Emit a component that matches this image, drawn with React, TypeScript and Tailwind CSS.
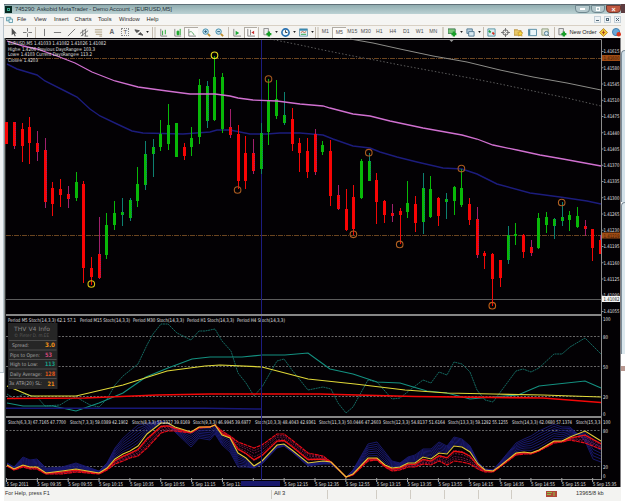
import type { ReactNode } from 'react'

type Point = [number, number]

// open/close body and wick extents, already in chart pixels
type Candle = [wickTop: number, bodyTop: number, bodyBottom: number, wickBottom: number, side: string]

const CANDLES: Candle[] = [
  [122, 122, 144, 144, 'r'], [122, 122, 146, 149, 'm'], [123, 129, 146, 162, 'r'], [117, 127, 143, 164, 'r'],
  [131, 143, 152, 161, 'm'], [138, 150, 202, 208, 'm'], [182, 188, 204, 216, 'r'], [179, 189, 195, 207, 'r'],
  [186, 194, 199, 208, 'm'], [172, 182, 198, 201, 'g'], [181, 184, 268, 283, 'r'], [257, 268, 277, 285, 'r'],
  [217, 254, 278, 279, 'm'], [213, 225, 255, 259, 'g'], [201, 213, 225, 230, 'g'], [198, 212, 215, 226, 't'],
  [198, 200, 218, 221, 't'], [167, 184, 201, 207, 'g'], [141, 154, 185, 190, 't'], [139, 147, 154, 177, 't'],
  [120, 134, 147, 151, 'g'], [104, 125, 144, 150, 'g'], [123, 123, 157, 157, 'g'], [143, 147, 156, 160, 'r'],
  [127, 138, 147, 156, 'g'], [79, 85, 137, 144, 'g'], [81, 86, 121, 128, 't'], [56, 77, 120, 121, 'g'],
  [73, 77, 129, 133, 'g'], [109, 127, 135, 138, 'm'], [125, 134, 181, 189, 'r'], [136, 153, 181, 189, 'r'],
  [139, 153, 171, 174, 'm'], [123, 133, 169, 174, 't'], [79, 101, 132, 145, 'g'], [80, 99, 116, 119, 'g'],
  [92, 115, 123, 125, 't'], [108, 119, 144, 151, 'r'], [138, 143, 153, 172, 'r'], [138, 151, 172, 178, 'r'],
  [129, 134, 172, 175, 'm'], [141, 145, 152, 155, 'g'], [140, 151, 196, 206, 'r'], [185, 195, 209, 210, 'm'],
  [189, 209, 230, 231, 'r'], [185, 197, 229, 235, 'r'], [159, 161, 198, 199, 'g'], [153, 161, 181, 181, 't'],
  [173, 180, 202, 224, 'r'], [200, 201, 215, 223, 'r'], [204, 213, 216, 222, 'm'], [208, 211, 215, 244, 'r'],
  [181, 203, 212, 218, 'g'], [196, 204, 223, 232, 'r'], [173, 188, 222, 234, 't'], [176, 189, 217, 218, 'g'],
  [197, 198, 216, 226, 'r'], [193, 199, 202, 219, 't'], [186, 187, 201, 215, 'g'], [169, 188, 205, 207, 'g'],
  [198, 204, 220, 225, 'r'], [207, 219, 255, 258, 'm'], [251, 253, 256, 269, 'r'], [253, 254, 279, 306, 'r'],
  [260, 260, 278, 287, 'r'], [226, 235, 260, 264, 't'], [223, 234, 236, 245, 'g'], [234, 235, 252, 258, 'r'],
  [240, 247, 253, 256, 'm'], [213, 218, 248, 249, 'g'], [212, 217, 225, 233, 'g'], [218, 219, 226, 239, 't'],
  [202, 217, 221, 226, 't'], [211, 215, 220, 231, 'g'], [207, 216, 227, 228, 'g'], [220, 226, 229, 236, 'm'],
  [229, 229, 248, 261, 'r'], [235, 240, 254, 254, 'm'],
]

const WICK: Record<string, string> = { r: '#f00808', m: '#a0206c', g: '#08b808', t: '#0d8070' }

const PINK: Point[] = [
  [7, 41], [23, 46], [37, 49], [57, 56], [75, 63], [92, 72], [115, 81], [138, 87], [167, 91], [190, 94], [215, 94],
  [230, 96], [238, 98], [253, 100], [277, 101], [300, 104], [323, 106], [330, 108], [353, 114], [370, 116], [390, 121],
  [423, 128], [462, 135], [477, 139], [493, 145], [517, 150], [540, 155], [563, 159], [601, 166],
]
const BLUE: Point[] = [
  [7, 64], [17, 69], [37, 75], [45, 81], [67, 92], [77, 97], [90, 109], [100, 116], [117, 124], [132, 131], [143, 133],
  [183, 134], [210, 132], [217, 130], [230, 130], [250, 134], [267, 134], [280, 133], [300, 133], [323, 135], [333, 139],
  [353, 146], [370, 148], [380, 152], [397, 157], [417, 162], [443, 168], [462, 169], [477, 174], [497, 184], [530, 193],
  [560, 197], [587, 201], [601, 204],
]
const GREY: Point[] = [[350, 39], [373, 43], [400, 49], [433, 56], [467, 62], [500, 70], [533, 77], [567, 83], [601, 90]]
const DOTTED: Point[] = [
  [270, 39], [300, 45], [323, 50], [353, 56], [380, 61], [400, 65], [443, 73], [470, 78], [500, 84], [533, 91], [567, 98], [601, 106],
]

const MARKERS: [number, number, string][] = [
  [91.3, 284, '#d8c010'], [214.5, 55.3, '#e8e020'], [268.5, 79, '#a85a20'], [237.6, 190, '#a85a20'], [353.4, 234.3, '#b06022'],
  [368.8, 152.7, '#a85a20'], [399.7, 244.4, '#b06022'], [461.4, 168.6, '#a85a20'], [492.3, 305.7, '#c06018'], [561.7, 202.5, '#b06022'],
]

const STOCH_FAST: Point[] = [
  [7, 394], [15, 399], [23, 394], [37, 397], [45, 406], [60, 405], [68, 400], [76, 397], [90, 405], [99, 407], [107, 399],
  [115, 385], [123, 376], [138, 364], [147, 345], [153, 334], [161, 324], [168, 324], [177, 333], [191, 340], [199, 331],
  [205, 331], [215, 329], [222, 341], [231, 351], [238, 373], [246, 383], [254, 396], [262, 387], [277, 361], [284, 359],
  [292, 370], [308, 390], [323, 387], [331, 389], [338, 403], [346, 413], [353, 407], [368, 380], [377, 382], [392, 399],
  [400, 398], [410, 390], [423, 380], [431, 383], [439, 372], [447, 375], [454, 362], [462, 364], [470, 372], [477, 390],
  [485, 400], [493, 402], [516, 371], [523, 369], [531, 372], [539, 368], [554, 354], [562, 354], [570, 347], [585, 338], [601, 354],
]
const STOCH_TEAL: Point[] = [
  [7, 403], [23, 406], [53, 406], [76, 411], [99, 403], [123, 393], [146, 377], [168, 368], [192, 359], [210, 357], [242, 357],
  [262, 355], [285, 355], [308, 353], [330, 369], [353, 374], [377, 382], [400, 383], [410, 386], [427, 391], [447, 393],
  [470, 399], [493, 397], [518, 395], [539, 386], [585, 381], [601, 388],
]
const STOCH_YELLOW: Point[] = [
  [7, 386], [31, 396], [76, 396], [123, 385], [167, 371], [205, 366], [220, 365], [262, 367], [308, 379], [355, 384],
  [405, 390], [447, 393], [493, 394], [543, 395], [601, 397],
]
const STOCH_RED: Point[] = [[7, 398.5], [85, 398], [157, 395], [210, 394], [320, 394], [415, 396.5], [543, 398], [601, 402.5]]

// x, signal line, slow edge of the red bundle, fast edge of the blue bundle
const RIBBON: [number, number, number, number][] = [
  [7, 465, 466, 463], [14, 469, 470, 467], [23, 465, 467, 457], [30, 467, 469, 460], [37, 467, 469, 459], [46, 473, 474, 468],
  [62, 471, 474, 467], [76, 469, 472, 463], [99, 473, 474, 471], [107, 468, 470, 463], [115, 459, 464, 448], [123, 454, 461, 438],
  [130, 451, 458, 432], [138, 446, 456, 425], [147, 434, 448, 423], [161, 423, 433, 421], [168, 423, 431, 423], [175, 427, 431, 432],
  [191, 432, 433, 447], [199, 427, 428, 438], [210, 427, 427, 440], [215, 425, 425, 434], [222, 435, 431, 445], [230, 438, 436, 452],
  [238, 453, 442, 467], [246, 458, 445, 467], [254, 466, 448, 468], [262, 461, 445, 464], [277, 445, 434, 448], [284, 444, 434, 446],
  [292, 450, 440, 452], [308, 463, 453, 466], [323, 461, 456, 464], [331, 462, 462, 464], [346, 477, 477, 477], [353, 474, 475, 470],
  [368, 458, 461, 444], [377, 458, 460, 442], [385, 465, 467, 452], [392, 468, 471, 461], [400, 467, 470, 463], [408, 463, 467, 457],
  [415, 463, 467, 455], [423, 457, 464, 449], [431, 459, 465, 449], [439, 453, 461, 442], [447, 454, 465, 446], [454, 446, 461, 437],
  [462, 447, 462, 439], [470, 452, 464, 446], [478, 464, 469, 462], [485, 470, 472, 469], [493, 471, 472, 470], [500, 466, 467, 462],
  [516, 453, 455, 443], [524, 452, 454, 439], [531, 453, 454, 436], [539, 450, 451, 431], [554, 441, 443, 424], [562, 441, 442, 427],
  [570, 437, 440, 427], [585, 431, 443, 441], [593, 436, 446, 459], [601, 441, 449, 462],
]

const PRICES = ['1.41615', '1.41580', '1.41545', '1.41510', '1.41475', '1.41440', '1.41405', '1.41370', '1.41335', '1.41300', '1.41265', '1.41230', '1.41195', '1.41160', '1.41125', '1.41090', '1.41055']

const TIMES = ['2011', '09:35', '09:55', '10:15', '10:35', '10:55', '11:15', '11:35', '', '12:15', '12:35', '12:55', '13:15', '13:35', '13:55', '14:15', '14:35', '14:55', '15:15', '15:35']

const STOCH_LABELS: [number, number, string][] = [
  [8, 68, 'Period M5 Stoch(14,3,3) 62.1 57.1'], [80, 50, 'Period M15 Stoch(14,3,3)'], [133, 51, 'Period M30 Stoch(14,3,3)'],
  [187, 47, 'Period H1 Stoch(14,3,3)'], [237, 48, 'Period H4 Stoch(14,3,3)'],
]

const RIBBON_LABELS: [number, number, string][] = [
  [8, 58, 'Stoch(6,3,3) 67.7165 47.7700'], [70, 58, 'Stoch(7,3,3) 59.0389 42.1902'], [132, 58, 'Stoch(8,3,3) 53.2327 39.8169'],
  [193, 58, 'Stoch(9,3,3) 46.9945 39.6977'], [255, 61, 'Stoch(10,3,3) 48.4043 42.9361'], [319, 62, 'Stoch(11,3,3) 50.0446 47.2603'],
  [383, 62, 'Stoch(12,3,3) 54.8137 51.6164'], [448, 60, 'Stoch(13,3,3) 59.1292 55.1255'], [512, 60, 'Stoch(14,3,3) 62.0680 57.1374'],
  [576, 24.5, 'Stoch(15,3,3'],
]

const INFO_ROWS: [string, string, string, number, number][] = [
  ['Spread:', '3.0', '#f09018', 12, 17], ['Pips to Open:', '53', '#d04878', 10, 30], ['High to Low:', '113', '#18a088', 10, 28],
  ['Daily Average:', '128', '#e05818', 10, 32], ['3x ATR(20) SL:', '21', '#f09018', 9, 33],
]

const pts = (line: Point[]) => line.map(p => p.join(',')).join(' ')

const blend = (edge: 2 | 3, t: number) => pts(RIBBON.map(row => [row[0], row[1] + (row[edge] - row[1]) * t] as Point))

function Label({ x, y, w, fill = '#e0e0e0', size = 5, bold, children }: { x: number; y: number; w?: number; fill?: string; size?: number; bold?: boolean; children: string }) {
  return (
    <text x={x} y={y} fill={fill} fontSize={size} textLength={w} lengthAdjust="spacingAndGlyphs" fontWeight={bold ? 700 : 400}>
      {children}
    </text>
  )
}

function PriceChart() {
  return (
    <g>
      <path d="M6 58.5H601M6 235.5H601" stroke="#6b4520" strokeDasharray="5 1 1 1" />
      <path d="M6 299.5H601" stroke="#5c5c5c" />
      <polyline points={pts(GREY)} stroke="#8c8c88" fill="none" />
      <polyline points={pts(DOTTED)} stroke="#5a5a5a" fill="none" strokeDasharray="1.5 2" />
      <path d="M261.5 40V315" stroke="#1c1c80" />
      <polyline points={pts(BLUE)} stroke="#1c1c7c" strokeWidth="1.4" fill="none" />
      {CANDLES.map(([wt, bt, bb, wb, side], i) => {
        const x = 6.7 + i * 7.714
        const up = side === 'g' || side === 't'
        const left = Math.round(x - 1.5)
        return (
          <g key={i} shapeRendering="crispEdges">
            <rect x={left + 1} y={wt} width="1" height={wb - wt} fill={WICK[side]} />
            <rect x={left} y={bt} width="3" height={bb - bt} fill={up ? '#08b808' : '#f80404'} />
            {(side === 'm' || side === 't') && (
              <path d={`M${left + 2.5} ${bt}V${bb}`} stroke={WICK[side]} strokeDasharray="1 1" />
            )}
          </g>
        )
      })}
      <polyline points={pts(PINK)} stroke="#d070d0" strokeWidth="1.3" fill="none" />
      {MARKERS.map(([x, y, color]) => (
        <circle key={x} cx={x} cy={y} r="3.3" stroke={color} strokeWidth="1.1" fill="none" />
      ))}
      <path d="M449.5 40h4l-2 2z" fill="#9a9a9a" />
      <Label x={8} y={45} w={98}>EURUSD,M5  1.41033 1.41082 1.41026 1.41082</Label>
      <Label x={8} y={50.5} w={87}>High= 1.4206 Previous DaysRange= 103.3</Label>
      <Label x={8} y={56} w={84}>Low= 1.4103 Current DaysRange= 113.2</Label>
      <Label x={8} y={61.5} w={30}>Close= 1.4203</Label>
    </g>
  )
}

function StochPane() {
  return (
    <g fill="none">
      <path d="M6 336.5H601M6 366.5H601M6 396.5H601" stroke="#686868" strokeDasharray="2 1.5" />
      <polyline points={pts(STOCH_FAST)} stroke="#146860" strokeDasharray="2 .6" />
      <polyline points={pts(STOCH_TEAL)} stroke="#149080" strokeWidth="1.2" />
      <polyline points={pts(STOCH_YELLOW)} stroke="#e0d838" strokeWidth="1.2" />
      <polyline points={pts(STOCH_RED)} stroke="#f40808" strokeWidth="1.6" />
      <path d="M6 408.3H205L261 409" stroke="#181878" strokeWidth="1.5" />
      {STOCH_LABELS.map(([x, w, text]) => (
        <Label key={x} x={x} y={322} w={w}>{text}</Label>
      ))}
    </g>
  )
}

function InfoPanel() {
  return (
    <g>
      <rect x="8" y="323" width="49.5" height="66" fill="#262626" />
      <Label x={14} y={331} w={36} size={6} fill="#858585">THV  V4  Info</Label>
      <Label x={14} y={337} w={35} size={4.8} fill="#5c5c5c">© Pieter D. m.EE</Label>
      {INFO_ROWS.map(([name, value, color, x, w], i) => (
        <g key={name}>
          <path d={`M9 ${340.5 + i * 9.5}h47.5`} stroke="#4c4c4c" />
          <Label x={x} y={347 + i * 9.6} w={w} fill="#a8a8a8">{name}</Label>
          <Label x={value === '21' ? 47.5 : 45} y={347 + i * 9.7} w={value.length === 2 ? 7 : 10} size={6} fill={color} bold>{value}</Label>
        </g>
      ))}
    </g>
  )
}

function RibbonPane() {
  return (
    <g fill="none">
      <path d="M6 430.5H601M6 466.5H601" stroke="#686868" strokeDasharray="2 1.5" />
      {[0.15, 0.3, 0.44, 0.58, 0.72, 0.86, 1].map(t => (
        <polyline key={t} points={blend(3, t)} stroke="#1b1b74" strokeWidth=".9" />
      ))}
      {[0.3, 0.5, 0.7, 0.85].map(t => (
        <polyline key={t} points={blend(2, t)} stroke="#8c1c50" strokeWidth=".8" strokeDasharray="2 1" />
      ))}
      <polyline points={blend(2, 1)} stroke="#e80c18" strokeWidth="1.2" strokeDasharray="4 .6" />
      <polyline points={blend(2, 0.35)} stroke="#f01010" strokeWidth="1.3" />
      <polyline points={blend(2, 0)} stroke="#e0c838" strokeWidth="1.1" />
      {RIBBON_LABELS.map(([x, w, text]) => (
        <Label key={x} x={x} y={424} w={w}>{text}</Label>
      ))}
    </g>
  )
}

function Axes() {
  return (
    <g>
      <path d="M6 39.5H601.5V480" stroke="#8c8c8c" fill="none" />
      <path d="M6 315H602M6 417H602" stroke="#868686" strokeWidth="2" />
      <path d="M6 479.5H602" stroke="#8c8c8c" />
      {PRICES.map((price, i) => (
        <g key={price}>
          <path d={`M602 ${51.5 + i * 16.25}h1.5`} stroke="#8c8c8c" />
          <Label x={603.5} y={53.3 + i * 16.25} w={16}>{price}</Label>
        </g>
      ))}
      <rect x="602" y="55" width="18" height="6" fill="#a04c14" />
      <Label x={603.5} y={60} w={16} fill="#3a1a08">1.41600</Label>
      <rect x="602" y="232.5" width="18" height="6" fill="#a04c14" />
      <Label x={603.5} y={237.5} w={16} fill="#3a1a08">1.41219</Label>
      <rect x="602" y="296" width="18" height="6" fill="#f4f4f4" />
      <Label x={603.5} y={301} w={16} fill="#222">1.41082</Label>
      {([['100', 321], ['80', 338.5], ['50', 368.5], ['20', 398.5], ['0', 415.5], ['100', 423.5], ['80', 432.5], ['20', 468.5], ['0', 478]] as [string, number][]).map(([t, y]) => (
        <Label key={y} x={603} y={y} w={t.length * 2.5}>{t}</Label>
      ))}
      {TIMES.map((time, i) => {
        const x = 6.5 + i * 30.85
        return (
          <g key={i}>
            <path d={`M${x} 478v4`} stroke="#a4a4a4" />
            {time && <Label x={x} y={485.5} w={i === 0 ? 22 : 24}>{`5 Sep ${time}`}</Label>}
          </g>
        )
      })}
      <path d="M261.5 316V480" stroke="#1c1c80" />
      <rect x="241" y="481" width="39" height="5" fill="#18186c" />
    </g>
  )
}

function Slot({ children, pressed }: { children?: ReactNode; pressed?: boolean }) {
  return (
    <div className={pressed ? 'flex h-[11px] w-[13.5px] shrink-0 items-center justify-center border-t border-l border-[#b0aca4] bg-[#fbfaf8]' : 'flex h-[11px] w-[13.5px] shrink-0 items-center justify-center'}>
      {children}
    </div>
  )
}

function Icon({ d, color = '#707070', children }: { d?: string; color?: string; children?: ReactNode }) {
  return (
    <Slot>
      <svg viewBox="0 0 10 10" className="h-[9px] w-[9px]" fill="none" stroke={color}>
        {d && <path d={d} />}
        {children}
      </svg>
    </Slot>
  )
}

function Drop() {
  return (
    <div className="flex w-[4.5px] shrink-0 justify-center">
      <svg viewBox="0 0 4 3" className="h-[2px] w-[3px]"><path d="M0 0h4l-2 3z" fill="#222" /></svg>
    </div>
  )
}

const Bar = () => <div className="flex w-[3.5px] shrink-0 justify-center"><div className="h-[11px] w-px bg-[#c4bcb0]" /></div>

const Grip = () => (
  <div className="flex w-[7px] shrink-0 justify-center gap-px">
    <div className="h-[11px] w-px bg-[#c4bcb0]" />
    <div className="h-[11px] w-[2px] bg-[#dcd8d0]" />
  </div>
)

const greenPlus = <path d="M6.5 4v5.5M3.8 6.8h5.5" stroke="#18a028" strokeWidth="2.6" />

function Toolbar() {
  return (
    <div className="flex h-[13px] items-center overflow-hidden border-t border-[#d8d0c4] bg-[#f4f3f0] pl-[3px]">
      <Icon color="none"><path d="M3 0v8l2-1.500 1.500 3 1-.5-1.300-3H8.500z" fill="#505050" /></Icon>
      <Icon d="M5 0v4M5 6v4M0 5h4M6 5h4" />
      <Bar />
      <Icon d="M5 1v8" />
      <Icon d="M1 5h8" />
      <Icon d="M1 9L9 1" />
      <Icon d="M0 6L7 1M1 9L9 3M3 2v7M6 2v7M5 9h4" />
      <Icon d="M1 2h8M1 4.5h8M2 7h7M6 9h3" color="#a89878" />
      <Slot><span className="text-[6.5px] font-bold text-[#666]">A</span></Slot>
      <Slot><span className="flex h-[8px] w-[8px] items-center justify-center border border-dotted border-[#888] text-[6px] leading-none text-[#555]">T</span></Slot>
      <Icon color="#505050"><path d="M1 2l2 3 3-2zM5 7l2-2 3 3z" fill="#505050" /></Icon>
      <Drop />
      <Grip />
      <Icon color="#808080" d="M2 1v8h7"><path d="M4 3v5M7 2v5" stroke="#18a028" /></Icon>
      <Icon color="#808080" d="M2 1v8h7"><path d="M4.500 3.500h2v4h-2zM8 1v7" fill="#18b028" stroke="#18a028" /></Icon>
      <Slot pressed>
        <svg viewBox="0 0 10 10" className="size-[9px]" fill="none"><path d="M2 1v8h8" stroke="#808080" /><path d="M2 5q3-3 6 3" stroke="#58a868" /></svg>
      </Slot>
      <div className="w-[2px] shrink-0" />
      <Icon><circle cx="4" cy="4" r="3" fill="#c8e4f0" stroke="#3888a8" /><path d="M6.5 6.5L9 9" stroke="#c09030" strokeWidth="2" /><path d="M4 2.5v3M2.5 4h3" stroke="#205878" /></Icon>
      <Icon><circle cx="4" cy="4" r="3" fill="#c8e4f0" stroke="#3888a8" /><path d="M6.5 6.5L9 9" stroke="#c09030" strokeWidth="2" /><path d="M2.5 4h3" stroke="#205878" /></Icon>
      <Bar />
      <Icon color="#808080" d="M2 1v8h8"><path d="M4 3l4 2.5L4 8z" fill="#20a838" stroke="none" /></Icon>
      <Slot pressed>
        <svg viewBox="0 0 10 10" className="size-[9px]" fill="none"><path d="M2 1v8h8M5 2v6" stroke="#808080" /><path d="M9 3L6 5l3 2z" fill="#c83030" /></svg>
      </Slot>
      <Bar />
      <Icon><path d="M1 .5h5v7H1z" fill="#eee" stroke="#888" />{greenPlus}</Icon>
      <Drop />
      <Icon><circle cx="5" cy="5" r="4" fill="#f0f8fc" stroke="#2870b0" strokeWidth="1.8" /><path d="M5 2.5V5h2" stroke="#333" /></Icon>
      <Drop />
      <Icon><path d="M.5 1h9v8h-9z" fill="#e8f4f8" stroke="#6898b0" /><path d="M1 2h8" stroke="#3888b0" strokeWidth="2" /><path d="M2 5l2-1 2 1 2-1" stroke="#c05030" /><path d="M2 7h6" stroke="#20a040" /></Icon>
      <Drop />
      <div className="flex w-[4px] shrink-0 gap-px">
        <div className="h-[11px] w-px bg-[#c4bcb0]" />
        <div className="h-[11px] w-[2px] bg-[#dcd8d0]" />
      </div>
      {['M1', 'M5', 'M15', 'M30', 'H1', 'H4', 'D1', 'W1', 'MN'].map(tf => (
        <Slot key={tf} pressed={tf === 'M5'}><span className="text-[5.2px] text-[#505050]">{tf}</span></Slot>
      ))}
      <div className="flex w-[5.5px] shrink-0 justify-center"><div className="h-[11px] w-[2px] bg-[#d4d0c6]" /></div>
      <Icon><path d="M0 1h8v5H0z" fill="#78c878" stroke="#407850" />{greenPlus}</Icon>
      <Drop />
      <Icon><path d="M1 1h6v5H1z" fill="#b8d0e0" stroke="#507890" /><path d="M3 4h6v5H3z" fill="#d8e8f0" stroke="#507890" /></Icon>
      <Drop />
      <Bar />
      <Icon><path d="M1 1h8v8H1z" fill="#d8ecf0" stroke="#5090a0" /><path d="M2 3l2 2" stroke="#20a040" strokeWidth="2" /><path d="M6 5l2 2" stroke="#d03020" strokeWidth="2" /></Icon>
      <Icon><circle cx="5" cy="5" r="3" stroke="#555" /><path d="M5 0v4M5 6v4M0 5h4M6 5h4" /></Icon>
      <Icon><path d="M0 2h4l1 1h3v5H0z" fill="#e8c868" stroke="#b89040" /><path d="M7 3l1 2 2 .3-1.5 1.5.5 2.200-2-1-2 1 .5-2.200L4 5.300 6 5z" fill="#f8d840" stroke="#b88820" strokeWidth=".6" /></Icon>
      <Icon><path d="M.5 1.5h9v7h-9z" fill="#e8f4f8" stroke="#5088a0" /><path d="M1.5 2v6" stroke="#5088a0" strokeWidth="2" /></Icon>
      <Icon><path d="M1 1h7v7H1z" fill="#e4e8d8" stroke="#889878" /><circle cx="6" cy="6" r="2.2" fill="#d8ecf4" stroke="#507890" /><path d="M7.5 7.5L9.5 9.5" /></Icon>
      <Bar />
      <Icon><path d="M1 .5h5v7H1z" fill="#e8e8e8" stroke="#808080" />{greenPlus}</Icon>
      <span className="w-[27px] shrink-0 text-[5.7px] tracking-[-0.05px] whitespace-nowrap text-[#222]">New Order</span>
      <Icon><path d="M5 .5L9.5 5 5 9.5.5 5z" fill="#f0c838" stroke="#b88828" /><path d="M5 3v4M3.5 5h3" stroke="#a04020" /></Icon>
      <Icon><circle cx="4.5" cy="4.5" r="4" fill="#68a8d8" stroke="#3878a8" /><circle cx="7.5" cy="7" r="2.5" fill="#d83820" stroke="none" /></Icon>
    </div>
  )
}

function TitleBar() {
  return (
    <div className="flex h-[10px] items-center border-t border-[#607078] bg-linear-to-b from-[#91adb0] to-[#bcd2d4] pl-px">
      <div className="flex size-[7px] items-center justify-center bg-[#062820]"><div className="size-[3px] border border-[#38a890]" /></div>
      <span className="ml-[3px] flex-1 text-[5.9px] leading-none tracking-[-0.1px] whitespace-nowrap text-[#28343c]">745290: Askobid MetaTrader - Demo Account - [EURUSD,M5]</span>
      <div className="flex h-[9px] gap-px self-start text-[#f8f8f8]">
        <div className="flex h-[8px] w-[15px] items-center justify-center rounded-b-sm border border-[#708890] bg-[#b4c8cc]"><div className="h-[2px] w-[5px] bg-white" /></div>
        <div className="flex h-[8px] w-[14px] items-center justify-center rounded-b-sm border border-[#708890] bg-[#b4c8cc]"><div className="size-[4px] border border-white" /></div>
        <div className="flex h-[8px] w-[15px] items-center justify-center rounded-b-sm border border-[#703830] bg-[#c05840]"><span className="text-[7px] leading-none font-bold">×</span></div>
      </div>
    </div>
  )
}

function MenuBar() {
  return (
    <div className="flex h-[11px] items-center bg-[#f5f5f3] pl-[2px] text-[5.8px] leading-none text-[#2c2c2c]">
      <svg viewBox="0 0 8 8" className="mr-[4px] size-[7px]" fill="none" stroke="#5898a8">
        <path d="M.5 1.5h5v4h-5z" fill="#c8e0e8" />
        <path d="M3.5 3.5h4v4h-4z" fill="#e8f4f8" />
      </svg>
      <span className="w-[17px]">File</span>
      <span className="w-[20px]">View</span>
      <span className="w-[20.5px]">Insert</span>
      <span className="w-[23.5px]">Charts</span>
      <span className="w-[21px]">Tools</span>
      <span className="w-[27.5px]">Window</span>
      <span className="flex-1">Help</span>
      <div className="flex gap-[3px]">
        <div className="flex size-[7px] items-end justify-center border border-[#c4d0d8] bg-[#eef3f6] pb-px"><div className="h-px w-[3px] bg-[#506878]" /></div>
        <div className="flex size-[7px] items-center justify-center border border-[#c4d0d8] bg-[#eef3f6]"><div className="size-[3px] border border-[#506878]" /></div>
        <div className="flex size-[7px] items-center justify-center border border-[#c4d0d8] bg-[#eef3f6]">
          <svg viewBox="0 0 3 3" className="size-[3px]" stroke="#506878"><path d="M0 0l3 3M3 0L0 3" /></svg>
        </div>
      </div>
    </div>
  )
}

function StatusBar() {
  return (
    <div className="flex h-[14px] items-center bg-[#f3f3f1] text-[5.8px] leading-none whitespace-nowrap text-[#303030]">
      <span className="w-[267px] pl-px text-[5.4px]">For Help, press F1</span>
      <div className="flex h-[9px] w-[56px] items-center border-l border-[#d0ccc4] pl-[2px]">All 3</div>
      <div className="h-[9px] w-[49px] border-l border-[#d0ccc4]" />
      <div className="h-[9px] w-[34px] border-l border-[#d0ccc4]" />
      <div className="h-[9px] w-[34px] border-l border-[#d0ccc4]" />
      <div className="h-[9px] w-[34px] border-l border-[#d0ccc4]" />
      <div className="h-[9px] w-[33px] border-l border-[#d0ccc4]" />
      <div className="h-[9px] w-[35px] border-l border-[#d0ccc4]" />
      <svg viewBox="0 0 11 6" className="h-[6px] w-[11px]">
        <path d="M0 0h11v6H0z" fill="#b04838" />
        <path d="M1 1.5h5M1 3.5h4M8 1v4" stroke="#88c048" />
      </svg>
      <span className="ml-[19px] text-[5.6px]">13965/8 kb</span>
    </div>
  )
}

export default function App() {
  return (
    <div className="flex h-[502px] w-[625px] overflow-hidden bg-white font-['Liberation_Sans',sans-serif]">
      <div className="flex w-[4px] shrink-0 flex-col pt-[17px]">
        <div className="h-[356px] border-t border-r border-b border-[#b8c4cc] bg-[#eef1f3]" />
      </div>
      <div className="flex w-[617px] shrink-0 flex-col pt-[4px]">
        <TitleBar />
        <MenuBar />
        <Toolbar />
        <svg viewBox="4 38 617 449" className="block h-[449px] w-[617px] font-['DejaVu_Sans',sans-serif]">
          <path d="M4 38h616.5v449H4z" fill="#030104" />
          <path d="M4.5 38v449" stroke="#8c9090" />
          <path d="M5.5 38v449" stroke="#303434" />
          <PriceChart />
          <StochPane />
          <InfoPanel />
          <RibbonPane />
          <Axes />
        </svg>
        <StatusBar />
      </div>
      <div className="flex w-[4px] shrink-0 flex-col">
        <div className="mt-[4px] h-[9px] bg-[#5c3c40]" />
        <div className="h-[37px] bg-[#f4f4f2]" />
        <div className="h-[152px] rounded-tl-sm border-t border-l border-[#7c8c98] bg-[#d4e2ea]" />
        <div className="h-[152px] rounded-tl-sm border-t border-l border-[#7c8c98] bg-[#dce8ee]" />
        <div className="mt-[12px] h-[5px] bg-[#b89890]" />
      </div>
    </div>
  )
}
